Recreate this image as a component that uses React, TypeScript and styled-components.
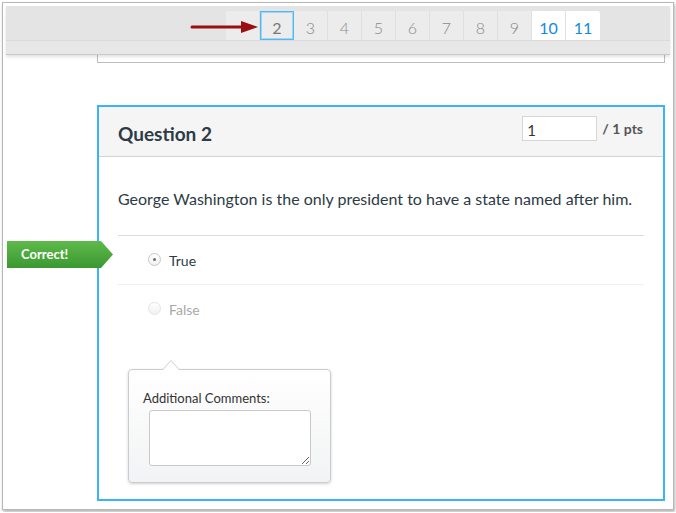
import React from 'react'
import styled, { createGlobalStyle } from 'styled-components'

const GlobalStyle = createGlobalStyle`
  html, body {
    margin: 0;
    padding: 0;
    background: #ffffff;
  }
  body {
    font-family: Lato, "Open Sans", "Liberation Sans", sans-serif;
    color: #2d3b45;
  }
  * { box-sizing: border-box; }
`

const Window = styled.div`
  margin: 2px;
  width: 672px;
  height: 508px;
  border: 1px solid #b8b8b8;
  box-shadow: 1px 2px 3px rgba(0, 0, 0, 0.3);
  padding: 3px;
  overflow: hidden;
  background: #fff;
`

const Toolbar = styled.div`
  position: relative;
  z-index: 2;
  background: #e4e4e4;
  box-shadow: 0 2px 3px rgba(0, 0, 0, 0.12);
`

const TopStrip = styled.div`
  position: relative;
  height: 35px;
  display: flex;
  align-items: flex-end;
  padding-left: 220px;
  border-bottom: 1px solid #dadada;
`

const SubStrip = styled.div`
  height: 14px;
  background: #e7e7e7;
  border-bottom: 1px solid #cacaca;
`

const Pager = styled.div`
  display: flex;
  height: 29px;
  background: #ececec;
  border-radius: 3px 3px 0 0;
`

const PageCell = styled.div<{ $active?: boolean; $link?: boolean }>`
  width: 34px;
  height: 29px;
  display: flex;
  align-items: center;
  justify-content: center;
  padding-top: 3px;
  font-size: 16px;
  font-weight: ${p => (p.$active || p.$link ? 400 : 300)};
  color: ${p => (p.$link ? '#1289e0' : p.$active ? '#777' : '#8a8a8a')};
  background: ${p => (p.$link ? '#ffffff' : 'transparent')};
  border-right: 1px solid ${p => (p.$active ? '#4fb9f4' : '#e0e0e0')};
  border-left: ${p => (p.$active ? '1px solid #4fb9f4' : 'none')};
  border-top: ${p => (p.$active ? '1px solid #4fb9f4' : 'none')};
  border-bottom: ${p => (p.$active ? '1px solid #4fb9f4' : 'none')};
  box-shadow: ${p => (p.$active ? 'inset 0 0 0 1px rgba(100, 195, 246, 0.55)' : 'none')};
  &:last-child {
    border-right: none;
    border-top-right-radius: 3px;
  }
`

const Arrow = styled.svg`
  position: absolute;
  left: 184px;
  top: 15px;
`

const Main = styled.div`
  padding: 0 5px 0 91px;
`

const PrevBox = styled.div`
  height: 8px;
  border: 1px solid #bdbdbd;
  border-top: none;
`

const Card = styled.div`
  margin-top: 42px;
  border: 2px solid #3bb3f6;
`

const CardHeader = styled.div`
  height: 50px;
  display: flex;
  justify-content: space-between;
  align-items: flex-start;
  padding: 9px 20px 0 19px;
  background: #f5f5f5;
  border-bottom: 1px solid #d3d3d3;
`

const Title = styled.h2`
  margin: 6px 0 0;
  font-size: 19px;
  line-height: 24px;
  font-weight: 700;
  color: #2d3b45;
`

const Points = styled.div`
  display: flex;
  align-items: center;
  gap: 5px;
  font-size: 14px;
  font-weight: 700;
  color: #555;
`

const PointsInput = styled.input`
  width: 75px;
  height: 25px;
  border: 1px solid #d6d6d6;
  padding: 2px 4px 0;
  font-family: Lato, "Liberation Sans", sans-serif;
  font-size: 15px;
  color: #333;
  background: #fff;
  outline: none;
`

const CardBody = styled.div`
  padding: 31px 19px 16px;
`

const QuestionText = styled.p`
  margin: 0;
  font-size: 16px;
  line-height: 22px;
  color: #2d3b45;
`

const Answers = styled.div`
  margin-top: 25px;
  border-top: 1px solid #dcdcdc;
`

const AnswerRow = styled.div<{ $last?: boolean }>`
  position: relative;
  height: ${p => (p.$last ? '48px' : '49px')};
  display: flex;
  align-items: center;
  padding-left: 30px;
  border-bottom: ${p => (p.$last ? 'none' : '1px solid #efefef')};
`

const Radio = styled.span<{ $checked?: boolean; $faded?: boolean }>`
  position: relative;
  width: 13px;
  height: 13px;
  margin-top: -1px;
  border-radius: 50%;
  border: 1px solid ${p => (p.$faded ? '#e3e3e3' : '#c6c6c6')};
  background: linear-gradient(#ffffff, #f1f1f1);
  &::after {
    content: '';
    display: ${p => (p.$checked ? 'block' : 'none')};
    position: absolute;
    left: 4px;
    top: 4px;
    width: 3px;
    height: 3px;
    border-radius: 50%;
    background: #6d6d6d;
  }
`

const AnswerLabel = styled.span<{ $faded?: boolean }>`
  margin-left: 8px;
  font-size: 14px;
  color: ${p => (p.$faded ? '#a9a9a9' : '#2d3b45')};
`

const CorrectFlag = styled.div`
  position: absolute;
  left: -111px;
  top: 5px;
  width: 106px;
  height: 27px;
  padding-left: 14px;
  line-height: 27px;
  font-size: 13px;
  font-weight: 700;
  color: #fff;
  background: linear-gradient(#5fba4b, #3b9831);
  clip-path: polygon(0 0, 94px 0, 106px 50%, 94px 100%, 0 100%);
`

const Popover = styled.div`
  position: relative;
  margin: 36px 0 0 10px;
  width: 203px;
  padding: 20px 14px 16px;
  border: 1px solid #c8ccd0;
  border-radius: 4px;
  background: linear-gradient(#ffffff, #f2f3f4);
  box-shadow: 0 1px 3px rgba(0, 0, 0, 0.18);
  &::before,
  &::after {
    content: '';
    position: absolute;
    left: 33px;
    border-style: solid;
    border-color: transparent;
  }
  &::before {
    top: -10px;
    border-width: 0 9px 10px;
    border-bottom-color: #c8ccd0;
  }
  &::after {
    top: -9px;
    left: 34px;
    border-width: 0 8px 9px;
    border-bottom-color: #ffffff;
  }
`

const PopoverLabel = styled.div`
  font-size: 13px;
  line-height: 16px;
  color: #333;
`

const CommentBox = styled.textarea`
  display: block;
  margin: 4px 0 0 6px;
  width: 162px;
  height: 56px;
  border: 1px solid #c9c9c9;
  border-radius: 3px;
  background: #fff;
  outline: none;
`

const pages = ['', '2', '3', '4', '5', '6', '7', '8', '9', '10', '11']

export default function App() {
  return (
    <>
      <GlobalStyle />
      <Window>
        <Toolbar>
          <TopStrip>
            <Pager>
              {pages.map((n, i) => (
                <PageCell key={i} $active={n === '2'} $link={n === '10' || n === '11'}>
                  {n}
                </PageCell>
              ))}
            </Pager>
            <Arrow width="68" height="12" viewBox="0 0 68 12">
              <line x1="2" y1="6" x2="54" y2="6" stroke="#9a0f10" strokeWidth="3" strokeLinecap="round" />
              <polygon points="51,0 68,6 51,12" fill="#9a0f10" />
            </Arrow>
          </TopStrip>
          <SubStrip />
        </Toolbar>
        <Main>
          <PrevBox />
          <Card>
            <CardHeader>
              <Title>Question 2</Title>
              <Points>
                <PointsInput defaultValue="1" />
                <span>/ 1 pts</span>
              </Points>
            </CardHeader>
            <CardBody>
              <QuestionText>
                George Washington is the only president to have a state named after him.
              </QuestionText>
              <Answers>
                <AnswerRow>
                  <CorrectFlag>Correct!</CorrectFlag>
                  <Radio $checked />
                  <AnswerLabel>True</AnswerLabel>
                </AnswerRow>
                <AnswerRow $last>
                  <Radio $faded />
                  <AnswerLabel $faded>False</AnswerLabel>
                </AnswerRow>
              </Answers>
              <Popover>
                <PopoverLabel>Additional Comments:</PopoverLabel>
                <CommentBox />
              </Popover>
            </CardBody>
          </Card>
        </Main>
      </Window>
    </>
  )
}
